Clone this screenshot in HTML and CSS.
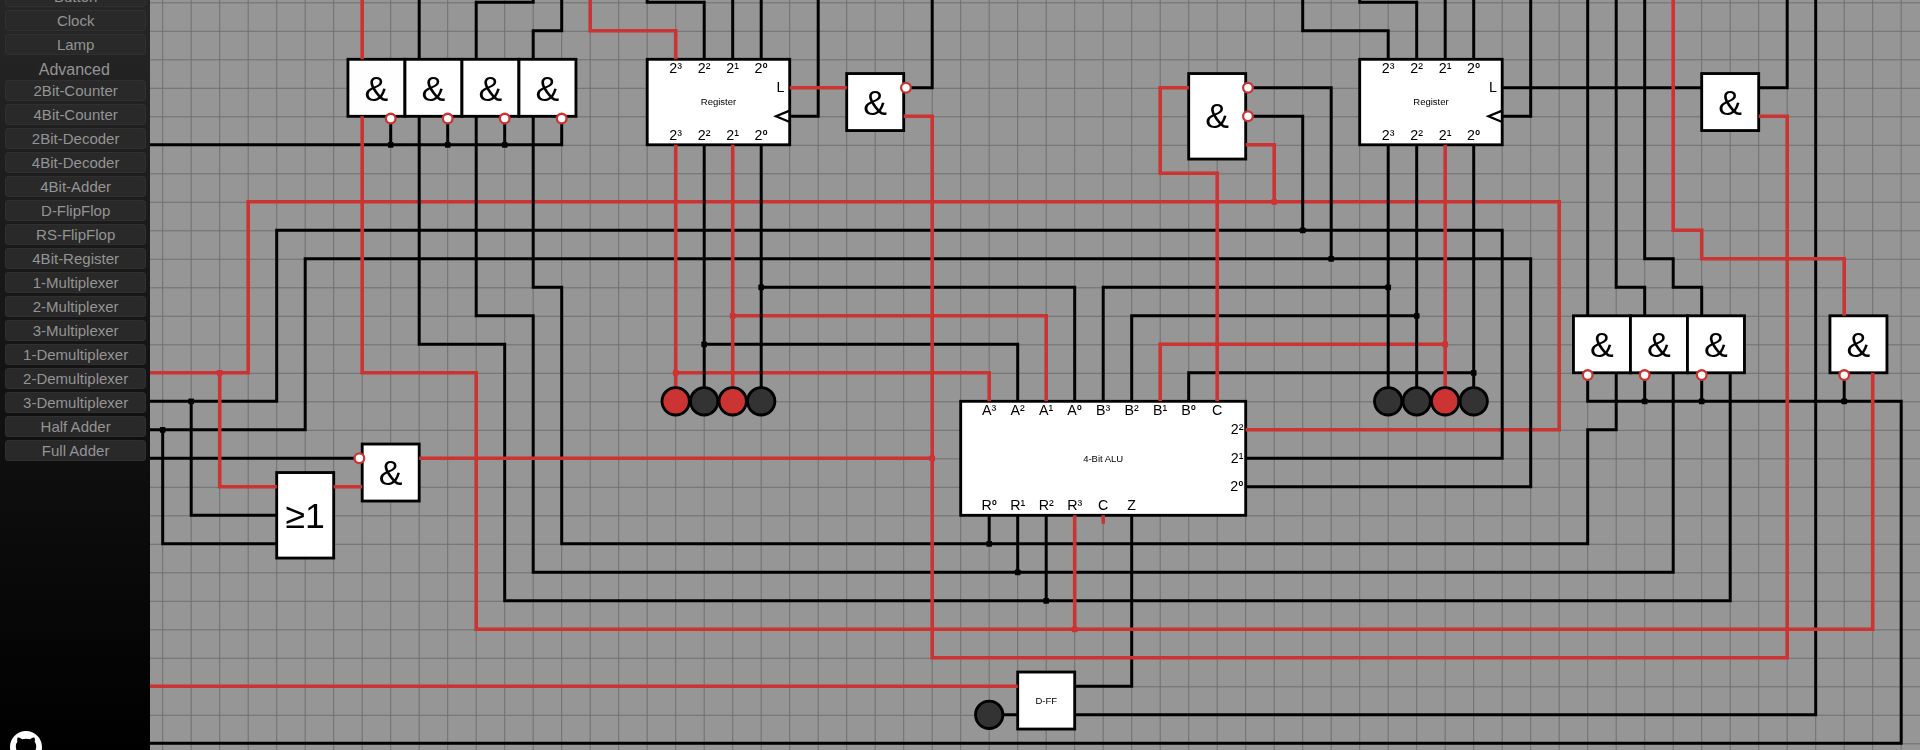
FILE: index.html
```html
<!DOCTYPE html>
<html lang="en">
<head>
<meta charset="utf-8">
<title>Logic Simulator</title>
<link rel="stylesheet" href="styles.css">
</head>
<body>
<aside class="sidebar">
  <div class="palette">
    <button class="part">Button</button>
    <button class="part">Clock</button>
    <button class="part">Lamp</button>
    <h2 class="group">Advanced</h2>
    <button class="part">2Bit-Counter</button>
    <button class="part">4Bit-Counter</button>
    <button class="part">2Bit-Decoder</button>
    <button class="part">4Bit-Decoder</button>
    <button class="part">4Bit-Adder</button>
    <button class="part">D-FlipFlop</button>
    <button class="part">RS-FlipFlop</button>
    <button class="part">4Bit-Register</button>
    <button class="part">1-Multiplexer</button>
    <button class="part">2-Multiplexer</button>
    <button class="part">3-Multiplexer</button>
    <button class="part">1-Demultiplexer</button>
    <button class="part">2-Demultiplexer</button>
    <button class="part">3-Demultiplexer</button>
    <button class="part">Half Adder</button>
    <button class="part">Full Adder</button>
  </div>
  <svg class="github" viewBox="0 0 16 16"><path d="M8 0C3.58 0 0 3.58 0 8c0 3.54 2.29 6.53 5.47 7.59.4.07.55-.17.55-.38 0-.19-.01-.82-.01-1.49-2.01.37-2.53-.49-2.69-.94-.09-.23-.48-.94-.82-1.13-.28-.15-.68-.52-.01-.53.63-.01 1.08.58 1.23.82.72 1.21 1.87.87 2.33.66.07-.52.28-.87.51-1.07-1.78-.2-3.64-.89-3.64-3.95 0-.87.31-1.59.82-2.15-.08-.2-.36-1.02.08-2.12 0 0 .67-.21 2.2.82.64-.18 1.32-.27 2-.27.68 0 1.36.09 2 .27 1.53-1.04 2.2-.82 2.2-.82.44 1.1.16 1.92.08 2.12.51.56.82 1.27.82 2.15 0 3.07-1.87 3.75-3.65 3.95.29.25.54.73.54 1.48 0 1.07-.01 1.93-.01 2.2 0 .21.15.46.55.38A8.013 8.013 0 0016 8c0-4.42-3.58-8-8-8z"/></svg>
</aside>
<main class="board">
<svg class="circuit" viewBox="0 0 1770 750">
<g transform="translate(12.7 2.8) scale(28.5)">

  <path class="grid" d="M0 -1V27M1 -1V27M2 -1V27M3 -1V27M4 -1V27M5 -1V27M6 -1V27M7 -1V27M8 -1V27M9 -1V27M10 -1V27M11 -1V27M12 -1V27M13 -1V27M14 -1V27M15 -1V27M16 -1V27M17 -1V27M18 -1V27M19 -1V27M20 -1V27M21 -1V27M22 -1V27M23 -1V27M24 -1V27M25 -1V27M26 -1V27M27 -1V27M28 -1V27M29 -1V27M30 -1V27M31 -1V27M32 -1V27M33 -1V27M34 -1V27M35 -1V27M36 -1V27M37 -1V27M38 -1V27M39 -1V27M40 -1V27M41 -1V27M42 -1V27M43 -1V27M44 -1V27M45 -1V27M46 -1V27M47 -1V27M48 -1V27M49 -1V27M50 -1V27M51 -1V27M52 -1V27M53 -1V27M54 -1V27M55 -1V27M56 -1V27M57 -1V27M58 -1V27M59 -1V27M60 -1V27M61 -1V27M62 -1V27"/>
  <path class="grid" d="M-1 0H63M-1 1H63M-1 2H63M-1 3H63M-1 4H63M-1 5H63M-1 6H63M-1 7H63M-1 8H63M-1 9H63M-1 10H63M-1 11H63M-1 12H63M-1 13H63M-1 14H63M-1 15H63M-1 16H63M-1 17H63M-1 18H63M-1 19H63M-1 20H63M-1 21H63M-1 22H63M-1 23H63M-1 24H63M-1 25H63M-1 26H63"/>

  <!-- everything but the grid and the lettering sits half a pixel above the grid lines -->
  <g transform="translate(0 -.0175)">

  <!-- component bodies -->
  <g class="body">
    <rect x="6.5" y="2" width="2" height="2"/>
    <rect x="8.5" y="2" width="2" height="2"/>
    <rect x="10.5" y="2" width="2" height="2"/>
    <rect x="12.5" y="2" width="2" height="2"/>
    <rect x="17" y="2" width="5" height="3"/>
    <rect x="24" y="2.5" width="2" height="2"/>
    <rect x="36" y="2.5" width="2" height="3"/>
    <rect x="42" y="2" width="5" height="3"/>
    <rect x="54" y="2.5" width="2" height="2"/>
    <rect x="49.5" y="11" width="2" height="2"/>
    <rect x="51.5" y="11" width="2" height="2"/>
    <rect x="53.5" y="11" width="2" height="2"/>
    <rect x="58.5" y="11" width="2" height="2"/>
    <rect x="7" y="15.5" width="2" height="2"/>
    <rect x="4" y="16.5" width="2" height="3"/>
    <rect x="28" y="14" width="10" height="4"/>
    <rect x="30" y="23.5" width="2" height="2"/>
  </g>

  <!-- wires carrying a high signal, lying under the low ones -->
  <path class="wire on" d="M-1 13H3V7H49V15H38"/>
  <path class="wire on" d="M18 13H29V14"/>
  <path class="wire on" d="M20 11H31V14"/>
  <path class="wire on" d="M35 14V12H45"/>

  <!-- low wires -->
  <path class="wire" d="M9 -1V2M13 -1V0H11V2M14 -1V1H13V2"/>
  <path class="wire" d="M17 -1V0H19V2M20 -1V2M21 -1V2M23 -1V4H22M27 -1V3H26.1"/>
  <path class="wire" d="M19 5V13.5M21 5V13.5"/>
  <path class="wire" d="M8 4.2V5M10 4.2V5M12 4.2V5M14 4.2V5H-1"/>
  <path class="wire" d="M9 4V12H12V21H55V13M11 4V11H13V20H53V13M13 4V10H14V19H50V15H51V13"/>
  <path class="wire" d="M21 10H32V14M19 12H30V14M33 14V10H43M34 14V11H44M36 14V13H46"/>
  <path class="wire" d="M40 -1V1H43V2M42 -1V0H44V2M45 -1V2M46 -1V2M48 -1V4H47"/>
  <path class="wire" d="M43 5V13.5M44 5V13.5M46 5V13.5"/>
  <path class="wire" d="M38.1 3H41V9M38.1 4H40V8M47 3H54M56 3H57V-1"/>
  <path class="wire" d="M50 -1V11M51 -1V10H52V11M52 -1V9H53V10H54V11"/>
  <path class="wire" d="M50 13.1V14H61V26H-1M52 13.1V14M54 13.1V14M59 13.1V14"/>
  <path class="wire" d="M58 -1V25H32M32 24H34V18"/>
  <path class="wire" d="M-1 15H5V9H48V17H38M0 15V19H4"/>
  <path class="wire" d="M-1 14H4V8H47V16H38M1 14V18H4"/>
  <path class="wire" d="M-1 16H6.8M29 18V19M30 18V20M31 18V21M29 25H30"/>

  <!-- remaining high wires -->
  <path class="wire on" d="M7 -1V2M7 4V13H11V22H60V13"/>
  <path class="wire on" d="M15 -1V1H18V2M18 5V13.5M20 5V13.5M22 3H24"/>
  <path class="wire on" d="M26 4H27V23H57V4H56"/>
  <path class="wire on" d="M2 13V17H4M6 17H7M9 16H27"/>
  <path class="wire on" d="M37 14V6H35V3H36M38 5H39V7M45 5V13.5"/>
  <path class="wire on" d="M53 -1V8H54V9H59V11M32 18V22M33 18V18.3M-1 24H30"/>

  <!-- junctions -->
  <g class="dot">
    <rect x="7.9" y="4.9" width=".2" height=".2"/>
    <rect x="9.9" y="4.9" width=".2" height=".2"/>
    <rect x="11.9" y="4.9" width=".2" height=".2"/>
    <rect x=".9" y="13.9" width=".2" height=".2"/>
    <rect x="-.1" y="14.9" width=".2" height=".2"/>
    <rect x="20.9" y="9.9" width=".2" height=".2"/>
    <rect x="18.9" y="11.9" width=".2" height=".2"/>
    <rect x="39.9" y="7.9" width=".2" height=".2"/>
    <rect x="40.9" y="8.9" width=".2" height=".2"/>
    <rect x="42.9" y="9.9" width=".2" height=".2"/>
    <rect x="43.9" y="10.9" width=".2" height=".2"/>
    <rect x="45.9" y="12.9" width=".2" height=".2"/>
    <rect x="51.9" y="13.9" width=".2" height=".2"/>
    <rect x="53.9" y="13.9" width=".2" height=".2"/>
    <rect x="58.9" y="13.9" width=".2" height=".2"/>
    <rect x="28.9" y="18.9" width=".2" height=".2"/>
    <rect x="29.9" y="19.9" width=".2" height=".2"/>
    <rect x="30.9" y="20.9" width=".2" height=".2"/>
  </g>
  <g class="dot on">
    <rect x="1.9" y="12.9" width=".2" height=".2"/>
    <rect x="17.9" y="12.9" width=".2" height=".2"/>
    <rect x="19.9" y="10.9" width=".2" height=".2"/>
    <rect x="26.9" y="15.9" width=".2" height=".2"/>
    <rect x="38.9" y="6.9" width=".2" height=".2"/>
    <rect x="44.9" y="11.9" width=".2" height=".2"/>
    <rect x="31.9" y="21.9" width=".2" height=".2"/>
  </g>

  <!-- clock inputs -->
  <path class="clock" d="M22 3.8L21.52 4L22 4.2"/>
  <path class="clock" d="M47 3.8L46.52 4L47 4.2"/>

  <!-- inverted outputs -->
  <g class="invert">
    <circle cx="8" cy="4.08" r=".17"/>
    <circle cx="10" cy="4.08" r=".17"/>
    <circle cx="12" cy="4.08" r=".17"/>
    <circle cx="14" cy="4.08" r=".17"/>
    <circle cx="26.08" cy="3" r=".17"/>
    <circle cx="38.08" cy="3" r=".17"/>
    <circle cx="38.08" cy="4" r=".17"/>
    <circle cx="6.9" cy="16" r=".17"/>
    <circle cx="50" cy="13.08" r=".17"/>
    <circle cx="52" cy="13.08" r=".17"/>
    <circle cx="54" cy="13.08" r=".17"/>
    <circle cx="59" cy="13.08" r=".17"/>
  </g>

  <!-- lamps -->
  <g class="lamp">
    <circle class="lit" cx="18" cy="14" r=".48"/>
    <circle cx="19" cy="14" r=".48"/>
    <circle class="lit" cx="20" cy="14" r=".48"/>
    <circle cx="21" cy="14" r=".48"/>
    <circle cx="43" cy="14" r=".48"/>
    <circle cx="44" cy="14" r=".48"/>
    <circle class="lit" cx="45" cy="14" r=".48"/>
    <circle cx="46" cy="14" r=".48"/>
    <circle cx="29" cy="25" r=".48"/>
  </g>
  </g>

  <!-- gate symbols -->
  <g class="symbol">
    <text x="7.5" y="3.43">&amp;</text>
    <text x="9.5" y="3.43">&amp;</text>
    <text x="11.5" y="3.43">&amp;</text>
    <text x="13.5" y="3.43">&amp;</text>
    <text x="25" y="3.93">&amp;</text>
    <text x="37" y="4.41">&amp;</text>
    <text x="55" y="3.93">&amp;</text>
    <text x="50.5" y="12.43">&amp;</text>
    <text x="52.5" y="12.43">&amp;</text>
    <text x="54.5" y="12.43">&amp;</text>
    <text x="59.5" y="12.43">&amp;</text>
    <text x="8" y="16.93">&amp;</text>
    <text x="5" y="18.42">≥1</text>
  </g>

  <!-- component names -->
  <g class="name">
    <text x="19.5" y="3.6">Register</text>
    <text x="44.5" y="3.6">Register</text>
    <text x="33" y="16.1">4-Bit ALU</text>
    <text x="31" y="24.6">D-FF</text>
  </g>

  <!-- pin labels -->
  <g class="pin">
    <text x="18" y="2.48">2³</text><text x="19" y="2.48">2²</text><text x="20" y="2.48">2¹</text><text x="21" y="2.48">2⁰</text>
    <text x="18" y="4.81">2³</text><text x="19" y="4.81">2²</text><text x="20" y="4.81">2¹</text><text x="21" y="4.81">2⁰</text>
    <text x="43" y="2.48">2³</text><text x="44" y="2.48">2²</text><text x="45" y="2.48">2¹</text><text x="46" y="2.48">2⁰</text>
    <text x="43" y="4.81">2³</text><text x="44" y="4.81">2²</text><text x="45" y="4.81">2¹</text><text x="46" y="4.81">2⁰</text>
    <text x="29" y="14.48">A³</text><text x="30" y="14.48">A²</text><text x="31" y="14.48">A¹</text><text x="32" y="14.48">A⁰</text>
    <text x="33" y="14.48">B³</text><text x="34" y="14.48">B²</text><text x="35" y="14.48">B¹</text><text x="36" y="14.48">B⁰</text>
    <text x="37" y="14.48">C</text>
    <text x="29" y="17.8">R⁰</text><text x="30" y="17.8">R¹</text><text x="31" y="17.8">R²</text><text x="32" y="17.8">R³</text>
    <text x="33" y="17.8">C</text><text x="34" y="17.8">Z</text>
  </g>
  <g class="pin right">
    <text x="21.82" y="3.14">L</text>
    <text x="46.82" y="3.14">L</text>
    <text x="37.92" y="15.14">2²</text>
    <text x="37.92" y="16.14">2¹</text>
    <text x="37.92" y="17.14">2⁰</text>
  </g>
</g>
</svg>
</main>
</body>
</html>
```
FILE: styles.css
```css
html, body {
  margin: 0;
  height: 100%;
}

body {
  display: flex;
  height: 750px;
  overflow: hidden;
  font-family: "Liberation Sans", Arial, sans-serif;
  background: #969696;
}

.sidebar {
  position: relative;
  flex: 0 0 150px;
  height: 750px;
  overflow: hidden;
  background: linear-gradient(#262626, #000);
}

.palette {
  display: flex;
  flex-direction: column;
  gap: 3.5px;
  margin-top: -13.7px;
  opacity: .999;
}

.part {
  display: block;
  box-sizing: border-box;
  width: 140.7px;
  height: 20.5px;
  margin: 0 0 0 5.3px;
  padding: 0;
  border: 1px solid #303030;
  border-radius: 3px;
  background: #292929;
  color: #949494;
  font: 15px "Liberation Sans", Arial, sans-serif;
  line-height: 18px;
  text-align: center;
}

.group {
  height: 18.6px;
  margin: 0;
  padding-right: 1.4px;
  color: #949494;
  font: 400 16px/24.6px "Liberation Sans", Arial, sans-serif;
  text-align: center;
}

.github {
  position: absolute;
  left: 10px;
  top: 731px;
  width: 32px;
  height: 32px;
  fill: #fff;
}

.board {
  flex: 1;
  min-width: 0;
  height: 750px;
}

.circuit {
  display: block;
  width: 1770px;
  height: 750px;
  opacity: .999;
  will-change: opacity;
}

.grid {
  fill: none;
  stroke: #707070;
  stroke-width: .034;
}

.body rect {
  fill: #fff;
  stroke: #000;
  stroke-width: .1;
}

.wire {
  fill: none;
  stroke: #000;
  stroke-width: .105;
  stroke-linejoin: miter;
}

.wire.on {
  stroke: #c33;
  stroke-width: .125;
}

.dot rect {
  fill: #000;
  rx: .03;
}

.dot.on rect {
  fill: #c33;
}

.clock {
  fill: none;
  stroke: #000;
  stroke-width: .08;
}

.invert circle {
  fill: #fff;
  stroke: #c33;
  stroke-width: .08;
}

.lamp circle {
  fill: #333;
  stroke: #000;
  stroke-width: .1;
}

.lamp .lit {
  fill: #c33;
}

.symbol text,
.name text,
.pin text {
  fill: #000;
  font-family: "Liberation Sans", Roboto, Arial, sans-serif;
  text-anchor: middle;
}

.symbol text {
  font-size: 1.25px;
}

.name text {
  font-size: .3333px;
}

.pin text {
  font-size: .5px;
}

.pin.right text {
  text-anchor: end;
}
```
